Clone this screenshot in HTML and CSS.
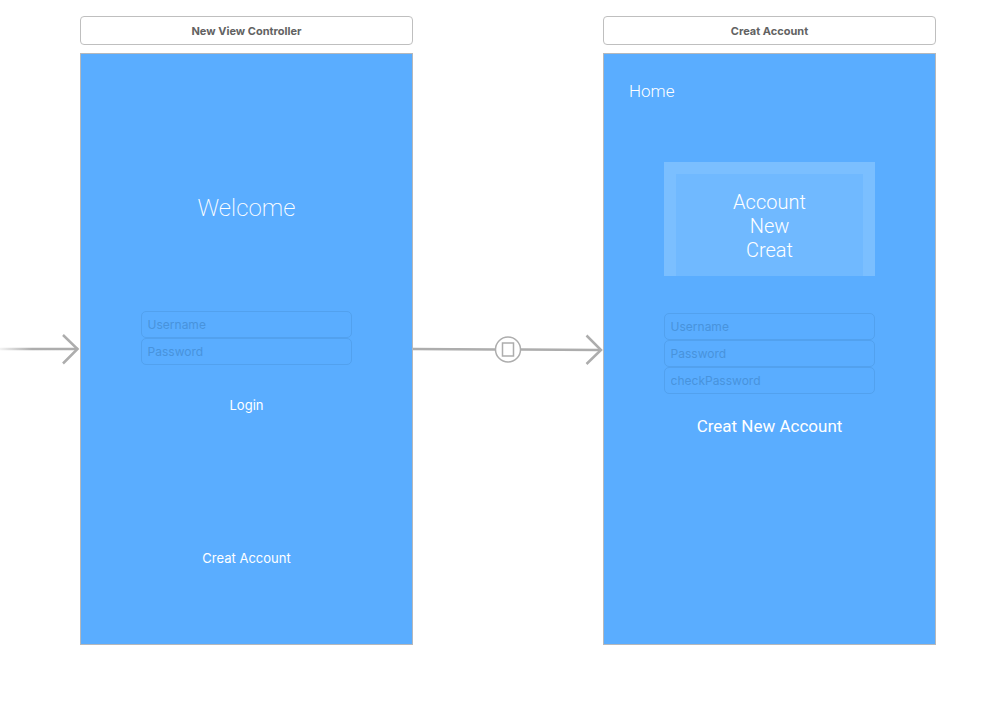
FILE: index.html
```html
<!DOCTYPE html>
<html lang="en">
<head>
<meta charset="utf-8">
<meta name="viewport" content="width=device-width, initial-scale=1">
<title>Storyboard</title>
<link rel="stylesheet" href="styles.css">
</head>
<body>
<main class="canvas">
  <svg class="entry" viewBox="0 0 80 32" aria-hidden="true">
    <defs>
      <linearGradient id="fade" gradientUnits="userSpaceOnUse" x1="0" y1="0" x2="32" y2="0">
        <stop offset="0" stop-color="#adadad" stop-opacity="0.15"/>
        <stop offset="1" stop-color="#adadad"/>
      </linearGradient>
    </defs>
    <path class="fade-line" d="M0 16H77V16.01"/>
    <path class="stroke" d="M63 2L77.500 16L63 30.500"/>
  </svg>

  <h2 class="title title-login">New View Controller</h2>
  <section class="phone phone-login" aria-label="New View Controller">
    <h1 class="welcome">Welcome</h1>
    <form class="fields">
      <input class="field" type="text" placeholder="Username" aria-label="Username">
      <input class="field" type="password" placeholder="Password" aria-label="Password">
    </form>
    <button class="action login" type="button">Login</button>
    <button class="action register" type="button">Creat Account</button>
  </section>

  <svg class="segue" viewBox="0 0 190 32" aria-hidden="true">
    <path class="stroke" d="M0 16L82 16.500M108 16.500L187 17"/>
    <circle class="ring" cx="95" cy="16.500" r="12.500"/>
    <path class="ring" d="M89.500 10H100.500V23H89.500Z"/>
    <path class="stroke" d="M173.500 2.500L188 17L173.500 31"/>
  </svg>

  <h2 class="title title-account">Creat Account</h2>
  <section class="phone phone-account" aria-label="Creat Account">
    <button class="home" type="button">Home</button>
    <div class="card">
      <p class="card-text">Account<br>New<br>Creat</p>
    </div>
    <form class="fields">
      <input class="field" type="text" placeholder="Username" aria-label="Username">
      <input class="field" type="password" placeholder="Password" aria-label="Password">
      <input class="field" type="password" placeholder="checkPassword" aria-label="checkPassword">
    </form>
    <button class="action create" type="button">Creat New Account</button>
  </section>
</main>
</body>
</html>
```
FILE: styles.css
```css
* {
  box-sizing: border-box;
}

body {
  margin: 0;
  background: #fff;
  font-family: Inter, "Liberation Sans", sans-serif;
}

.canvas {
  display: grid;
  grid-template-columns: 80fr 333fr 190fr 333fr 64fr;
  grid-template-rows: auto auto;
  row-gap: 8px;
  padding: 16px 0;
}

.title {
  grid-row: 1;
  margin: 0;
  padding: 7px 6px 6px;
  border: 1px solid #bfbfbf;
  border-radius: 4px;
  color: #626262;
  font-size: 11px;
  font-weight: 700;
  line-height: 14px;
  text-align: center;
}

.title-login,
.phone-login {
  grid-column: 2;
}

.title-account,
.phone-account {
  grid-column: 4;
}

.phone {
  grid-row: 2;
  display: flex;
  flex-direction: column;
  align-items: center;
  aspect-ratio: 9 / 16;
  border: 1px solid #b5b8bc;
  background: #5aadff;
  color: #fff;
}

.entry,
.segue {
  grid-row: 2;
  align-self: center;
  display: block;
  width: 100%;
  fill: none;
}

.entry {
  grid-column: 1;
}

.segue {
  grid-column: 3;
}

.stroke {
  stroke: #adadad;
  stroke-width: 2.5;
}

.fade-line {
  stroke: url(#fade);
  stroke-width: 2.5;
}

.ring {
  stroke: #adadad;
  stroke-width: 1.5;
}

button {
  padding: 0;
  border: 0;
  background: none;
  color: inherit;
  font-family: inherit;
}

.welcome,
.home,
.card-text,
.create {
  font-family: Roboto, "Liberation Sans", sans-serif;
}

.phone-login {
  padding-top: 138px;
}

.welcome {
  margin: 0 0 87px;
  font-size: 24px;
  font-weight: 200;
  line-height: 32px;
}

.fields {
  display: flex;
  flex-direction: column;
  width: 64%;
}

.field {
  width: 100%;
  height: 27px;
  padding: 0 6px;
  border: 1px solid #52a1ee;
  border-radius: 5px;
  background: none;
  color: #fff;
  font-family: inherit;
  font-size: 12px;
}

.field::placeholder {
  color: #4893dc;
  opacity: 1;
}

.action {
  font-size: 13px;
  font-weight: 400;
  line-height: 20px;
}

.login {
  margin-top: 30px;
}

.register {
  margin-top: 133px;
}

.phone-account {
  padding-top: 25px;
}

.home {
  align-self: flex-start;
  margin: 0 0 59px 25px;
  font-size: 17px;
  font-weight: 300;
  line-height: 24px;
}

.card {
  width: 64%;
  margin-bottom: 37px;
  padding: 12px 12px 0;
  background: #7bbfff;
}

.card-text {
  margin: 0;
  padding: 16px 0 14px;
  background: #70b9ff;
  font-size: 20px;
  font-weight: 300;
  line-height: 24px;
  text-align: center;
}

.action.create {
  margin-top: 20px;
  font-size: 17px;
  line-height: 24px;
}
```
